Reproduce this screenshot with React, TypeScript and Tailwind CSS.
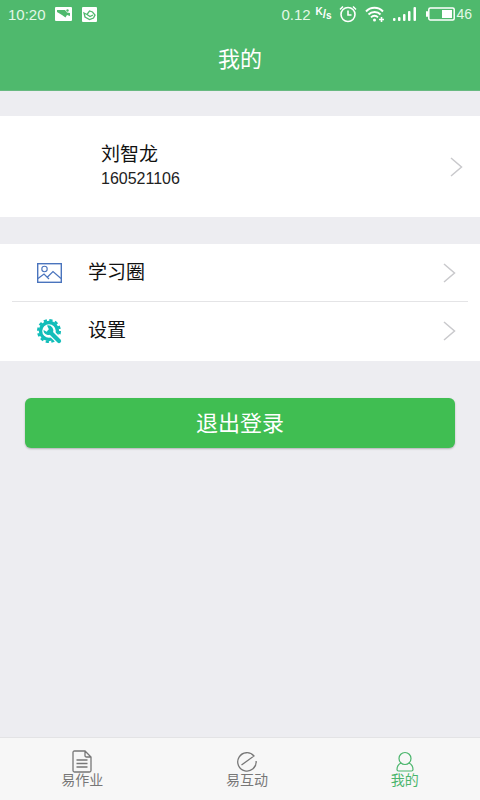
import type { ReactNode } from "react";

const StatusBar = () => {
  return (
    <div className="flex h-7 items-center justify-between pl-2 pr-2 text-[#e2f8e7]">
      <div className="flex items-center">
        <span className="w-[46px] text-[15px] leading-none">10:20</span>
        <svg width="17" height="14" viewBox="0 0 17 14" className="ml-[1px]">
          <rect width="17" height="14" rx="1" fill="#fff" />
          <path d="M2 3h8l2 2.500 3 .5v3l-3-1-1.500 2.500L7 8 2 5z" fill="#4fb96d" />
          <circle cx="12.500" cy="3.500" r="1.200" fill="#4fb96d" />
        </svg>
        <svg width="15" height="15" viewBox="0 0 15 15" className="ml-[10px]">
          <rect width="15" height="15" rx="1" fill="#fff" />
          <path
            d="M2 6l3 1.500L7.500 4l3 1 2.500 3-1.500 3-4 1.500L3 10zM5 7.500l3 2L11 8"
            fill="none"
            stroke="#4fb96d"
            strokeWidth="1.300"
          />
        </svg>
      </div>
      <div className="flex items-center">
        <span className="w-[34px] text-[15px] leading-none">0.12</span>
        <span className="flex w-4 items-center text-[10px] font-bold leading-none text-white">
          <span className="pb-1">K</span>
          <span className="text-xs">/</span>
          <span className="pt-1">s</span>
        </span>
        <svg
          width="18"
          height="18"
          viewBox="0 0 18 18"
          fill="none"
          stroke="#fff"
          strokeWidth="1.600"
          className="ml-[8px]"
        >
          <circle cx="9" cy="9.500" r="7" />
          <path d="M9 5.500V10h3.500M1 4.500L4 1.500M17 4.500L14 1.500" />
        </svg>
        <svg
          width="20"
          height="18"
          viewBox="0 0 20 18"
          fill="none"
          stroke="#fff"
          strokeWidth="1.900"
          className="ml-[8px]"
        >
          <path d="M1 6.500c4.500-5 12.500-5 17 0M3.500 9.500c3.300-3.300 9-3.300 12 0M6 12.300c2-2 5-2 7 0" />
          <circle cx="9.500" cy="15" r="1.500" fill="#fff" stroke="none" />
          <path d="M14 14.500h5M16.500 12v5" strokeWidth="1.600" />
        </svg>
        <svg width="24" height="16" viewBox="0 0 24 16" fill="#fff" className="ml-[8px]">
          <rect x="0" y="12" width="2.500" height="3" rx="1" />
          <rect x="5" y="11" width="2.500" height="4" rx="1" />
          <rect x="10" y="8" width="2.500" height="7" rx="1" />
          <rect x="15" y="5" width="2.500" height="10" rx="1" />
          <rect x="20.500" y="1" width="2.500" height="14" rx="1" />
        </svg>
        <svg width="29" height="15" viewBox="0 0 29 15" className="ml-[9px]">
          <rect x="2.800" y="1" width="25.400" height="12" rx="1.500" fill="none" stroke="#fff" strokeWidth="1.500" />
          <rect x="0" y="4" width="2" height="6" rx="1" fill="#fff" />
          <rect x="16" y="3" width="10" height="8" fill="#fff" />
        </svg>
        <span className="ml-[1px] text-sm leading-none">46</span>
      </div>
    </div>
  );
};

const Arrow = () => {
  return (
    <svg width="13" height="20" viewBox="0 0 13 20" fill="none" stroke="#c9c9cc" strokeWidth="1.500">
      <path d="M1 1l10.500 9L1 19" />
    </svg>
  );
};

const PictureIcon = () => {
  return (
    <svg width="25" height="20" viewBox="0 0 25 20" fill="none" stroke="#4a74bd">
      <rect x="0.700" y="0.700" width="23.600" height="18.600" strokeWidth="1.400" />
      <circle cx="7.500" cy="6" r="2.700" strokeWidth="1.100" />
      <path d="M1 15.500l6-4.500 5 5M10.500 14l5.500-5.500 8 7" strokeWidth="1.200" />
    </svg>
  );
};

const GearIcon = () => {
  return (
    <svg width="25" height="25" viewBox="0 0 25 25" fill="none" stroke="#12bdb9">
      <circle cx="12" cy="12" r="8.500" strokeWidth="3.400" />
      <circle cx="12" cy="12" r="10.800" strokeWidth="2.400" strokeDasharray="3.200 2.455" />
      <path d="M13.500 13.500l10 9.500" stroke="#fff" strokeWidth="7" />
      <path d="M12.500 12.500l9.500 9.500" strokeWidth="4.200" strokeLinecap="round" />
      <path
        d="M10 6.500a5 5 0 0 1 5.500 7.500 5 5 0 0 1-9-3l3.300 1.800 2.200-2.200z"
        fill="#12bdb9"
        stroke="none"
      />
    </svg>
  );
};

interface MenuRowProps {
  icon: ReactNode;
  label: string;
}

const MenuRow = ({ icon, label }: MenuRowProps) => {
  return (
    <button className="flex h-[58px] w-full items-center pl-[25px] pr-3 text-left">
      <span className="w-[51px]">{icon}</span>
      <span className="flex-1 text-[19px] leading-6">{label}</span>
      <Arrow />
    </button>
  );
};

interface TabProps {
  icon: ReactNode;
  label: string;
  active?: boolean;
}

const Tab = ({ icon, label, active }: TabProps) => {
  return (
    <a
      href="#"
      aria-current={active ? "page" : undefined}
      className={`flex flex-col items-center ${active ? "text-[#4bb56c]" : "text-[#777777]"}`}
    >
      {icon}
      <span className="text-sm leading-[14px]">{label}</span>
    </a>
  );
};

const App = () => {
  return (
    <div className="flex min-h-screen flex-col bg-[#ededf1] font-['Liberation_Sans','Noto_Sans_CJK_SC',sans-serif] text-[#111111]">
      <header className="h-[91px] border-b border-[#68b981] bg-[#4fb96d]">
        <StatusBar />
        <h1 className="mt-4 text-center text-[22px] leading-8 text-white">我的</h1>
      </header>

      <main className="flex-1">
        <button className="mt-[25px] flex h-[101px] w-full items-center bg-white pl-[101px] pr-[17px] text-left">
          <span className="flex flex-1 flex-col">
            <span className="text-[19px] leading-6">刘智龙</span>
            <span className="text-base leading-6 text-[#222222]">160521106</span>
          </span>
          <Arrow />
        </button>

        <section className="mt-[27px] divide-y divide-[#e4e4e6] bg-white px-3 pb-px">
          <MenuRow icon={<PictureIcon />} label="学习圈" />
          <MenuRow icon={<GearIcon />} label="设置" />
        </section>

        <div className="mt-[37px] px-[25px]">
          <button className="h-[50px] w-full rounded-md bg-[#40be52] text-[22px] text-white shadow-[0_1px_2px_rgba(0,0,0,0.25)]">
            退出登录
          </button>
        </div>
      </main>

      <nav className="flex h-[63px] justify-around border-t border-[#e3e3e5] bg-[#f7f7f7] pt-3">
        <Tab
          label="易作业"
          icon={
            <svg width="20" height="23" viewBox="0 0 20 23" fill="none" stroke="currentColor" strokeWidth="1.300">
              <path d="M13 1H2.500Q1 1 1 2.500v18Q1 22 2.500 22h15q1.500 0 1.500-1.500V7zM13 1v4.500Q13 7 14.500 7H19M4.500 10h11M4.500 13.500h11M4.500 17h11" />
            </svg>
          }
        />
        <Tab
          label="易互动"
          icon={
            <svg width="20" height="23" viewBox="0 0 20 23" fill="none" stroke="currentColor" strokeWidth="1.300">
              <path d="M4.500 15L17 6A9.200 9.200 0 1 0 19.100 11" />
            </svg>
          }
        />
        <Tab
          active
          label="我的"
          icon={
            <svg width="18" height="23" viewBox="0 0 18 23" fill="none" stroke="currentColor" strokeWidth="1.200">
              <circle cx="9" cy="8.500" r="6" />
              <path d="M5 13C2 14.500 1 17 1 19.500q0 1.500 1.500 1.500h13q1.500 0 1.500-1.500c0-2.500-1-5-4-6.500" />
            </svg>
          }
        />
      </nav>
    </div>
  );
};

export default App;
